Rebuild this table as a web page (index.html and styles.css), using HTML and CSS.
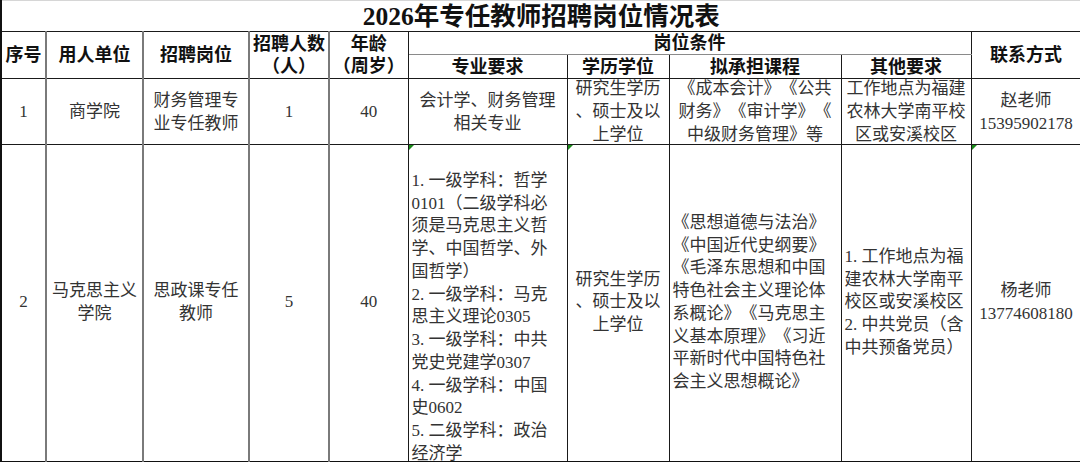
FILE: index.html
```html
<!DOCTYPE html>
<html lang="zh-CN">
<head>
<meta charset="utf-8">
<title>2026年专任教师招聘岗位情况表</title>
<link rel="stylesheet" href="styles.css">
</head>
<body>
<table class="sheet">
  <colgroup>
    <col class="c-no"><col class="c-unit"><col class="c-post"><col class="c-num"><col class="c-age">
    <col class="c-major"><col class="c-degree"><col class="c-course"><col class="c-other"><col class="c-contact">
  </colgroup>
  <tr class="r-title">
    <td colspan="10" class="title">2026年专任教师招聘岗位情况表</td>
  </tr>
  <tr class="r-headA">
    <th rowspan="2" class="vg">序号</th>
    <th rowspan="2" class="vg">用人单位</th>
    <th rowspan="2" class="vg">招聘岗位</th>
    <th rowspan="2" class="vg">招聘人数<br>（人）</th>
    <th rowspan="2">年龄<br>（周岁）</th>
    <th colspan="4" class="group">岗位条件</th>
    <th rowspan="2">联系方式</th>
  </tr>
  <tr class="r-headB">
    <th>专业要求</th>
    <th>学历学位</th>
    <th>拟承担课程</th>
    <th>其他要求</th>
  </tr>
  <tr class="r-one">
    <td class="vg"><div class="fit">1</div></td>
    <td class="vg"><div class="fit">商学院</div></td>
    <td class="vg"><div class="fit">财务管理专<br>业专任教师</div></td>
    <td class="vg"><div class="fit">1</div></td>
    <td><div class="fit">40</div></td>
    <td><div class="fit">会计学、财务管理<br>相关专业</div></td>
    <td><div class="fit">研究生学历<br>、硕士及以<br>上学位</div></td>
    <td><div class="fit">《成本会计》《公共<br>财务》《审计学》《<br>中级财务管理》等</div></td>
    <td><div class="fit">工作地点为福建<br>农林大学南平校<br>区或安溪校区</div></td>
    <td><div class="fit">赵老师<br>15395902178</div></td>
  </tr>
  <tr class="r-two">
    <td class="vg">2</td>
    <td class="vg">马克思主义<br>学院</td>
    <td class="vg">思政课专任<br>教师</td>
    <td class="vg">5</td>
    <td>40</td>
    <td class="left bottom flag"><div class="sink">1. 一级学科：哲学<br>0101（二级学科必<br>须是马克思主义哲<br>学、中国哲学、外<br>国哲学）<br>2. 一级学科：马克<br>思主义理论0305<br>3. 一级学科：中共<br>党史党建学0307<br>4. 一级学科：中国<br>史0602<br>5. 二级学科：政治<br>经济学</div></td>
    <td class="flag">研究生学历<br>、硕士及以<br>上学位</td>
    <td class="left">《思想道德与法治》<br>《中国近代史纲要》<br>《毛泽东思想和中国<br>特色社会主义理论体<br>系概论》《马克思主<br>义基本原理》《习近<br>平新时代中国特色社<br>会主义思想概论》</td>
    <td class="left">1. 工作地点为福<br>建农林大学南平<br>校区或安溪校区<br>2. 中共党员（含<br>中共预备党员）</td>
    <td class="flag">杨老师<br>13774608180</td>
  </tr>
</table>
</body>
</html>
```

FILE: styles.css
```css
html, body {
  margin: 0;
  padding: 0;
  background: #ffffff;
}

.sheet {
  border-collapse: collapse;
  table-layout: fixed;
  width: 1080px;
  font-family: "Liberation Serif", "Noto Sans CJK SC", serif;
  font-size: 17px;
  line-height: 22.75px;
  color: #333333;
  text-spacing-trim: space-all;
  border-left: 2px solid #111111;
  border-bottom: 2px solid #111111;
}

.c-no { width: 45px; }
.c-unit { width: 97px; }
.c-post { width: 106px; }
.c-num { width: 80px; }
.c-age { width: 79px; }
.c-major { width: 159px; }
.c-degree { width: 102px; }
.c-course { width: 172px; }
.c-other { width: 130px; }
.c-contact { width: 110px; }

.sheet td, .sheet th {
  border: 1px solid #1a1a1a;
  padding: 0 3px;
  text-align: center;
  vertical-align: middle;
  white-space: nowrap;
  overflow: hidden;
}

.sheet th {
  font-weight: 700;
  font-size: 18px;
  line-height: 22px;
  color: #111111;
  padding: 0 2px;
}

.sheet .vg {
  border-right: 2px solid #7a7a7a;
}

.r-title { height: 31px; }
.r-headA { height: 22px; }
.r-headB { height: 24px; }
.r-one { height: 66px; }
.r-two { height: 317px; }

.sheet .title {
  font-weight: 700;
  font-size: 25.5px;
  line-height: 29px;
  color: #111111;
  border-top: 1px solid #d6d6d6;
  border-left: 1px solid #d6d6d6;
  border-right: 1px solid #ffffff;
  border-bottom: 1px solid #1a1a1a;
}

.sheet .group {
  border-bottom: 1px solid #8a8a8a;
}

.sheet .r-headB th {
  border-top: 1px solid #8a8a8a;
}

.fit {
  height: 64px;
  display: flex;
  flex-direction: column;
  justify-content: center;
  line-height: 23px;
}

.sheet .left {
  text-align: left;
  padding-left: 3px;
}

.sheet .bottom {
  vertical-align: bottom;
  padding-bottom: 0;
}

.sink {
  margin-bottom: -5px;
}

.flag {
  position: relative;
}

.flag::before {
  content: "";
  position: absolute;
  left: 0;
  top: 0;
  width: 0;
  height: 0;
  border-top: 5px solid #1a8a1a;
  border-right: 5px solid transparent;
}
```
